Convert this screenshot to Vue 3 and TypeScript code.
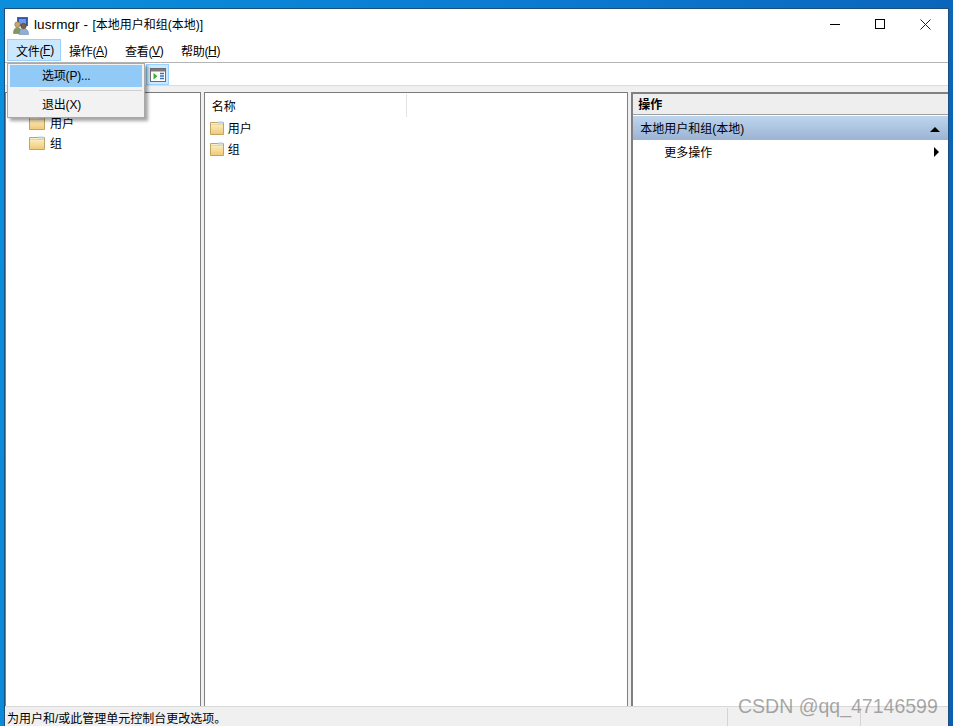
<script setup lang="ts">
const menus: { label: string; key: string; active?: boolean }[] = [
  { label: '文件', key: 'F', active: true },
  { label: '操作', key: 'A' },
  { label: '查看', key: 'V' },
  { label: '帮助', key: 'H' },
]
const treeRows = ['用户', '组']
</script>

<template>
  <div class="desktop">
    <div class="window">
      <header class="titlebar">
        <svg class="app-icon" width="16" height="18" viewBox="0 0 16 18">
          <rect x="4.500" y=".5" width="10" height="8" fill="#2f55ad" stroke="#5a6472" />
          <rect x="6" y="2" width="7" height="5" fill="#6f9be6" />
          <path d="M.5 16.500c0-4 1.500-6 4-6s4 2 4 6z" fill="#7f9a5c" stroke="#5c7040" stroke-width=".5" />
          <circle cx="4.500" cy="7.500" r="2.800" fill="#c9a277" stroke="#7b6a50" stroke-width=".5" />
          <path d="M6 17.500c0-4 1.500-6 4.500-6s5 2 5 6z" fill="#8fb0d4" stroke="#5f7c9e" stroke-width=".5" />
          <circle cx="10.500" cy="9" r="2.800" fill="#7d5f44" stroke="#4c3a2a" stroke-width=".5" />
        </svg>
        <span class="title-text"><span class="title-app">lusrmgr -</span> [本地用户和组(本地)]</span>
        <div class="controls">
          <svg width="10" height="10" viewBox="0 0 10 10"><path d="M0 5.500h10" stroke="#000" fill="none" /></svg>
          <svg width="10" height="10" viewBox="0 0 10 10"><rect x=".5" y=".5" width="9" height="9" stroke="#000" fill="none" /></svg>
          <svg width="11" height="11" viewBox="0 0 11 11"><path d="M.5 .5l10 10M10.500 .5l-10 10" stroke="#222" fill="none" /></svg>
        </div>
      </header>

      <nav class="menubar">
        <span v-for="m in menus" :key="m.key" class="menu-item" :class="{ active: m.active }">{{ m.label }}(<u>{{ m.key }}</u>)</span>
      </nav>

      <div class="toolbar">
        <button class="tool-btn">
          <svg width="16" height="14" viewBox="0 0 16 14">
            <rect x=".5" y=".5" width="15" height="13" fill="#fff" stroke="#6d6d6d" />
            <rect x="1" y="1" width="14" height="2.500" fill="#7a7a7a" />
            <path d="M3.500 5v6.500l4-3.250z" fill="#35b035" />
            <path d="M10 5.500h4M10 8h4M10 10.500h4" stroke="#3f6fb5" stroke-width="1.500" />
          </svg>
        </button>
      </div>

      <main class="panes">
        <section class="pane tree">
          <div v-for="r in treeRows" :key="r" class="tree-row">
            <svg class="folder" width="16" height="14" viewBox="0 0 16 14">
              <defs>
                <linearGradient id="fold-a" x1="0" y1="0" x2="0" y2="1">
                  <stop offset="0" stop-color="#fdf3cf" />
                  <stop offset="1" stop-color="#f0c974" />
                </linearGradient>
              </defs>
              <path d="M.5 1.500h15v12H.5z" fill="url(#fold-a)" stroke="#c2a461" />
              <path d="M1 3.500h14" stroke="#e8d6a0" />
              <rect x="9.500" y="0.500" width="5" height="2" fill="#b3cfe8" />
            </svg>
            <span class="lift">{{ r }}</span>
          </div>
        </section>

        <section class="pane list">
          <div class="list-head"><span class="col-name">名称</span></div>
          <div v-for="r in treeRows" :key="r" class="list-row">
            <svg class="folder" width="14" height="14" viewBox="0 0 14 14">
              <defs>
                <linearGradient id="fold-b" x1="0" y1="0" x2="0" y2="1">
                  <stop offset="0" stop-color="#fdf3cf" />
                  <stop offset="1" stop-color="#f0c974" />
                </linearGradient>
              </defs>
              <path d="M.5 1.500h13v12H.5z" fill="url(#fold-b)" stroke="#c2a461" />
              <path d="M1 3.500h12" stroke="#e8d6a0" />
              <rect x="8" y="0.500" width="5" height="2" fill="#b3cfe8" />
            </svg>
            <span>{{ r }}</span>
          </div>
        </section>

        <section class="pane actions">
          <div class="actions-head"><span class="lift">操作</span></div>
          <div class="actions-group">
            <span class="lift">本地用户和组(本地)</span>
            <i class="tri-up"></i>
          </div>
          <div class="actions-row">
            <span class="lift">更多操作</span>
            <i class="tri-right"></i>
          </div>
        </section>
      </main>

      <footer class="statusbar">
        <span class="status-main">为用户和/或此管理单元控制台更改选项。</span>
        <span class="status-cell"></span>
        <span class="status-cell last"></span>
      </footer>

      <div class="dropdown">
        <div class="drop-item hot">选项(P)...</div>
        <div class="drop-sep"></div>
        <div class="drop-item">退出(X)</div>
      </div>
    </div>
    <div class="watermark">CSDN @qq_47146599</div>
  </div>
</template>

<style>
html, body { margin: 0; padding: 0; }
</style>

<style scoped>
.desktop {
  position: relative;
  width: 953px;
  height: 726px;
  box-sizing: border-box;
  padding: 8px 4px 0 4px;
  overflow: hidden;
  background: linear-gradient(100deg, #0b8fdc 0%, #0a78cf 55%, #0a5fb4 100%);
  font-family: "Liberation Sans", "Noto Sans CJK SC", sans-serif;
  font-size: 12px;
  color: #000;
}
.lift { margin-top: -2px; }
.window {
  position: relative;
  height: 718px;
  box-sizing: border-box;
  border: 1px solid #1c4f7c;
  border-bottom: 0;
  background: #f0f0f0;
  display: flex;
  flex-direction: column;
}
.titlebar {
  height: 30px;
  flex: none;
  background: #fff;
  display: flex;
  align-items: center;
  padding-left: 8px;
}
.app-icon { margin: 3px 5px 0 0; }
.title-text { font-size: 12px; margin-top: -2px; }
.title-app { font-size: 13.500px; letter-spacing: 0.100px; margin-right: 1px; }
.controls {
  margin-left: auto;
  display: flex;
  align-items: center;
  gap: 35px;
  padding-right: 17px;
}
.menubar {
  height: 23px;
  flex: none;
  background: #fff;
  border-bottom: 1px solid #b4b4b4;
  display: grid;
  grid-template-columns: 54px 56px 56px 56px;
  padding-left: 2px;
}
.menu-item {
  box-sizing: border-box;
  height: 23px;
  padding-left: 8px;
  display: flex;
  align-items: center;
  letter-spacing: -0.300px;
}
.menu-item.active {
  background: #cce8ff;
  box-shadow: inset 0 0 0 1px #99d1ff;
  height: 22px;
  padding-left: 9px;
}
.toolbar {
  height: 22px;
  flex: none;
  background: #fff;
  display: flex;
  padding-left: 141px;
  border-bottom: 1px solid #dcdcdc;
}
.tool-btn {
  width: 23px;
  height: 21px;
  padding: 0;
  margin: 1px 0 0;
  background: #cce8ff;
  border: 1px solid #99d1ff;
  display: flex;
  align-items: center;
  justify-content: center;
}
.panes {
  flex: 1;
  min-height: 0;
  display: flex;
  gap: 3px;
  padding: 6px 0 0 0;
  background: #f0f0f0;
}
.pane {
  box-sizing: border-box;
  background: #fff;
  border: 1px solid #808080;
  border-top-color: #7a7a7a;
  height: 615px;
}
.tree { width: 196px; padding-top: 20px; }
.tree-row {
  height: 20px;
  display: flex;
  align-items: center;
  padding-left: 23px;
  gap: 5px;
}
.list { width: 425px; }
.list-head {
  height: 23px;
  display: flex;
  align-items: center;
  margin-right: 220px;
  border-right: 1px solid #e3e3e3;
  margin-top: 1px;
}
.col-name { padding-left: 7px; }
.list-row {
  height: 21px;
  display: flex;
  align-items: center;
  padding-left: 5px;
  gap: 4px;
}
.actions {
  width: 317px;
  border-width: 2px 0 1px 2px;
  border-color: #808080;
  display: flex;
  flex-direction: column;
}
.actions-head {
  height: 20px;
  background: #eeeeee;
  border-bottom: 1px solid #a0a0a0;
  display: flex;
  align-items: center;
  padding-left: 5px;
  font-weight: 700;
}
.actions-group {
  height: 24px;
  margin-top: 1px;
  background: linear-gradient(#bdd5ee, #9cb4d2);
  display: flex;
  align-items: center;
  justify-content: space-between;
  padding: 0 8px 0 7px;
}
.actions-row {
  height: 24px;
  display: flex;
  align-items: center;
  justify-content: space-between;
  padding: 0 9px 0 31px;
}
.tri-up {
  width: 0; height: 0;
  margin-top: 2px;
  border: 5px solid transparent;
  border-top: 0;
  border-bottom: 5px solid #000;
}
.tri-right {
  width: 0; height: 0;
  border: 5px solid transparent;
  border-right: 0;
  border-left: 5px solid #000;
}
.statusbar {
  height: 19px;
  flex: none;
  display: flex;
  align-items: center;
  border-top: 1px solid #d8d8d8;
  background: #f0f0f0;
  padding-left: 2px;
}
.status-main { flex: 1; margin-top: 2px; }
.status-cell {
  width: 133px;
  height: 18px;
  box-sizing: border-box;
  border-left: 1px solid #d4d4d4;
}
.status-cell.last { width: 88px; }
.dropdown {
  position: absolute;
  left: 2px;
  top: 54px;
  width: 138px;
  height: 55px;
  box-sizing: border-box;
  padding: 1px 2px;
  background: #f2f2f2;
  border: 1px solid #a8a8a8;
  box-shadow: 3px 3px 3px rgba(0, 0, 0, 0.35);
}
.drop-item {
  height: 22px;
  box-sizing: border-box;
  padding: 0 0 3px 32px;
  display: flex;
  align-items: center;
  letter-spacing: -0.200px;
}
.drop-item.hot { background: #91c9f7; }
.drop-sep {
  height: 1px;
  margin: 3px 0 3px 29px;
  background: #d0d0d0;
}
.watermark {
  position: absolute;
  left: 738px;
  top: 695px;
  font-family: "Liberation Sans", sans-serif;
  font-size: 19.500px;
  color: rgba(110, 110, 110, 0.6);
  white-space: nowrap;
}
</style>
